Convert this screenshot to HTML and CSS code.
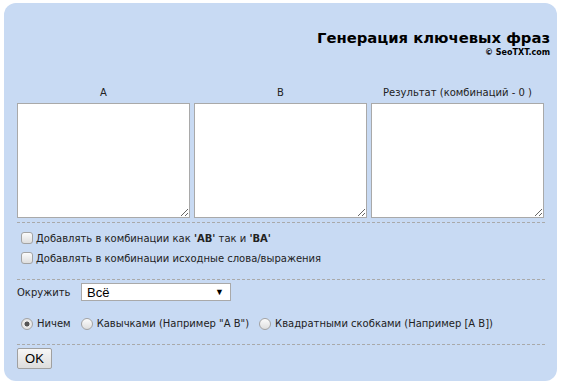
FILE: index.html
```html
<!DOCTYPE html>
<html lang="ru">
<head>
<meta charset="utf-8">
<title>Генерация ключевых фраз</title>
<link rel="stylesheet" href="styles.css">
</head>
<body>
<div class="panel">
  <div class="header">
    <div class="title">Генерация ключевых фраз</div>
    <div class="copy">© SeoTXT.com</div>
  </div>
  <div class="cols">
    <div class="col">
      <div class="col-label">A</div>
      <textarea class="box"></textarea>
    </div>
    <div class="col">
      <div class="col-label">B</div>
      <textarea class="box"></textarea>
    </div>
    <div class="col">
      <div class="col-label">Результат (комбинаций - 0 )</div>
      <textarea class="box"></textarea>
    </div>
  </div>
  <div class="section checks">
    <label class="opt"><input type="checkbox" class="chk"><span>Добавлять в комбинации как <b>'AB'</b> так и <b>'BA'</b></span></label>
    <label class="opt"><input type="checkbox" class="chk"><span>Добавлять в комбинации исходные слова/выражения</span></label>
  </div>
  <div class="section surround">
    <span class="surround-label">Окружить</span>
    <div class="select">
      <span class="select-value">Всё</span>
      <span class="select-arrow">▼</span>
    </div>
  </div>
  <div class="section radios">
    <label class="ropt"><input type="radio" name="wrap" class="rad" checked><span>Ничем</span></label>
    <label class="ropt"><input type="radio" name="wrap" class="rad"><span>Кавычками (Например "A B")</span></label>
    <label class="ropt"><input type="radio" name="wrap" class="rad"><span>Квадратными скобками (Например [A B])</span></label>
  </div>
  <div class="section actions">
    <button class="ok">OK</button>
  </div>
</div>
</body>
</html>
```

FILE: styles.css
```css
html, body {
  margin: 0;
  padding: 0;
  background: #ffffff;
}

body {
  font-family: "DejaVu Sans", Verdana, sans-serif;
  color: #222;
}

.panel {
  box-sizing: border-box;
  margin: 3px 0 0 4px;
  width: 553px;
  height: 378px;
  border-radius: 12px;
  background: #c8daf3;
  padding: 27px 12px 0 13px;
}

.header {
  text-align: right;
  margin-right: -5px;
  color: #000;
}

.title {
  font-size: 14.8px;
  font-weight: bold;
  line-height: 16px;
}

.copy {
  font-size: 8px;
  font-weight: bold;
  line-height: 11px;
  margin-top: 1px;
}

.cols {
  display: grid;
  grid-template-columns: 173px 173px 173px;
  column-gap: 4px;
  margin-top: 29px;
  padding-bottom: 4px;
  border-bottom: 1px dashed #a9a9a9;
}

.col-label {
  font-size: 10px;
  line-height: 12px;
  text-align: center;
  margin-bottom: 4px;
}

.box {
  display: block;
  box-sizing: border-box;
  width: 173px;
  height: 115px;
  margin: 0;
  border: 1px solid #a9a9a9;
  background: #fff;
  padding: 2px;
}

.checks {
  display: flex;
  flex-direction: column;
  padding: 5px 0 11px 4px;
  border-bottom: 1px dashed #a9a9a9;
}

.opt {
  display: flex;
  align-items: center;
  height: 20px;
  font-size: 10px;
}

.chk, .rad {
  appearance: none;
  -webkit-appearance: none;
  box-sizing: border-box;
  width: 12px;
  height: 12px;
  margin: 0 3px 0 0;
  border: 1px solid #a3a3a3;
  background: linear-gradient(#fbfbfb, #dedede);
  flex: none;
}

.chk {
  border-radius: 3px;
}

.rad {
  border-radius: 50%;
  margin-right: 4px;
}

.rad:checked {
  background: radial-gradient(circle, #555 0, #555 2.2px, #ececec 2.8px, #dcdcdc 100%);
}

.surround {
  display: flex;
  align-items: center;
  padding: 3px 0 0 0;
  height: 18px;
  font-size: 10px;
}

.surround-label {
  width: 64px;
}

.select {
  box-sizing: border-box;
  width: 150px;
  height: 18px;
  border: 1px solid #a9a9a9;
  background: #fff;
  display: flex;
  align-items: center;
  justify-content: space-between;
  padding: 0 6px 0 5px;
  font-family: "Liberation Sans", Arial, sans-serif;
  font-size: 13px;
  color: #000;
}

.select-arrow {
  font-size: 9px;
}

.radios {
  display: flex;
  align-items: center;
  height: 13px;
  margin-top: 16px;
  padding: 0 0 14px 4px;
  border-bottom: 1px dashed #a9a9a9;
  font-size: 10px;
}

.ropt {
  display: flex;
  align-items: center;
  margin-right: 10px;
}

.actions {
  padding-top: 3px;
}

.ok {
  box-sizing: border-box;
  width: 35px;
  height: 21px;
  margin: 0;
  padding: 0;
  border: 1px solid #a0a0a0;
  border-radius: 2px;
  background: linear-gradient(#f6f6f6, #dddddd);
  font-family: "Liberation Sans", Arial, sans-serif;
  font-size: 13px;
  color: #000;
}
```
